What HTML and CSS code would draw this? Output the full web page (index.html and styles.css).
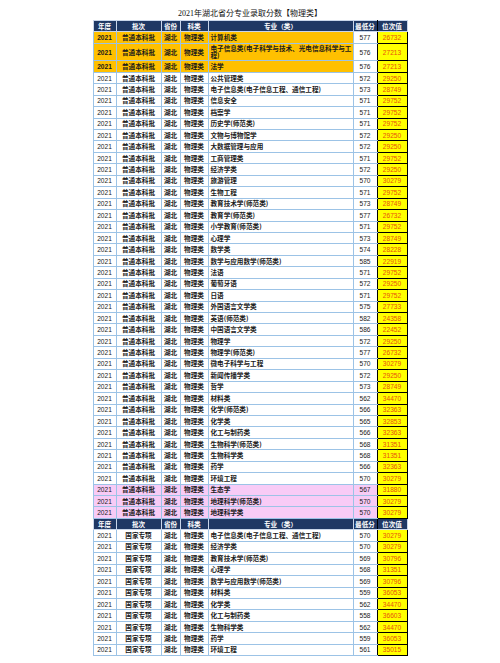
FILE: index.html
```html
<!DOCTYPE html>
<html lang="zh">
<head>
<meta charset="utf-8">
<title>2021年湖北省分专业录取分数【物理类】</title>
<link rel="stylesheet" href="styles.css">
</head>
<body>
<div class="page">
  <h1 class="title">2021年湖北省分专业录取分数【物理类】</h1>
  <table class="grid">
    <colgroup>
      <col class="w-year"><col class="w-batch"><col class="w-prov"><col class="w-type"><col class="w-major"><col class="w-score"><col class="w-rank">
    </colgroup>
    <tbody>
      <tr class="head"><th>年度</th><th>批次</th><th>省份</th><th>科类</th><th>专业（类）</th><th class="score">最低分</th><th>位次值</th></tr>
      <tr class="hl-orange"><td class="yr">2021</td><td>普通本科批</td><td>湖北</td><td>物理类</td><td class="major">计算机类</td><td class="score">577</td><td class="rank">26732</td></tr>
      <tr class="hl-orange tall"><td class="yr">2021</td><td>普通本科批</td><td>湖北</td><td>物理类</td><td class="major">电子信息类(电子科学与技术、光电信息科学与工程)</td><td class="score">576</td><td class="rank">27213</td></tr>
      <tr class="hl-orange"><td class="yr">2021</td><td>普通本科批</td><td>湖北</td><td>物理类</td><td class="major">法学</td><td class="score">576</td><td class="rank">27213</td></tr>
      <tr><td class="yr">2021</td><td>普通本科批</td><td>湖北</td><td>物理类</td><td class="major">公共管理类</td><td class="score">572</td><td class="rank">29250</td></tr>
      <tr><td class="yr">2021</td><td>普通本科批</td><td>湖北</td><td>物理类</td><td class="major">电子信息类(电子信息工程、通信工程)</td><td class="score">573</td><td class="rank">28749</td></tr>
      <tr><td class="yr">2021</td><td>普通本科批</td><td>湖北</td><td>物理类</td><td class="major">信息安全</td><td class="score">571</td><td class="rank">29752</td></tr>
      <tr><td class="yr">2021</td><td>普通本科批</td><td>湖北</td><td>物理类</td><td class="major">档案学</td><td class="score">571</td><td class="rank">29752</td></tr>
      <tr><td class="yr">2021</td><td>普通本科批</td><td>湖北</td><td>物理类</td><td class="major">历史学(师范类)</td><td class="score">571</td><td class="rank">29752</td></tr>
      <tr><td class="yr">2021</td><td>普通本科批</td><td>湖北</td><td>物理类</td><td class="major">文物与博物馆学</td><td class="score">572</td><td class="rank">29250</td></tr>
      <tr><td class="yr">2021</td><td>普通本科批</td><td>湖北</td><td>物理类</td><td class="major">大数据管理与应用</td><td class="score">572</td><td class="rank">29250</td></tr>
      <tr><td class="yr">2021</td><td>普通本科批</td><td>湖北</td><td>物理类</td><td class="major">工商管理类</td><td class="score">571</td><td class="rank">29752</td></tr>
      <tr><td class="yr">2021</td><td>普通本科批</td><td>湖北</td><td>物理类</td><td class="major">经济学类</td><td class="score">572</td><td class="rank">29250</td></tr>
      <tr><td class="yr">2021</td><td>普通本科批</td><td>湖北</td><td>物理类</td><td class="major">旅游管理</td><td class="score">570</td><td class="rank">30279</td></tr>
      <tr><td class="yr">2021</td><td>普通本科批</td><td>湖北</td><td>物理类</td><td class="major">生物工程</td><td class="score">571</td><td class="rank">29752</td></tr>
      <tr><td class="yr">2021</td><td>普通本科批</td><td>湖北</td><td>物理类</td><td class="major">教育技术学(师范类)</td><td class="score">573</td><td class="rank">28749</td></tr>
      <tr><td class="yr">2021</td><td>普通本科批</td><td>湖北</td><td>物理类</td><td class="major">教育学(师范类)</td><td class="score">577</td><td class="rank">26732</td></tr>
      <tr><td class="yr">2021</td><td>普通本科批</td><td>湖北</td><td>物理类</td><td class="major">小学教育(师范类)</td><td class="score">571</td><td class="rank">29752</td></tr>
      <tr><td class="yr">2021</td><td>普通本科批</td><td>湖北</td><td>物理类</td><td class="major">心理学</td><td class="score">573</td><td class="rank">28749</td></tr>
      <tr><td class="yr">2021</td><td>普通本科批</td><td>湖北</td><td>物理类</td><td class="major">数学类</td><td class="score">574</td><td class="rank">28228</td></tr>
      <tr><td class="yr">2021</td><td>普通本科批</td><td>湖北</td><td>物理类</td><td class="major">数学与应用数学(师范类)</td><td class="score">585</td><td class="rank">22919</td></tr>
      <tr><td class="yr">2021</td><td>普通本科批</td><td>湖北</td><td>物理类</td><td class="major">法语</td><td class="score">571</td><td class="rank">29752</td></tr>
      <tr><td class="yr">2021</td><td>普通本科批</td><td>湖北</td><td>物理类</td><td class="major">葡萄牙语</td><td class="score">572</td><td class="rank">29250</td></tr>
      <tr><td class="yr">2021</td><td>普通本科批</td><td>湖北</td><td>物理类</td><td class="major">日语</td><td class="score">571</td><td class="rank">29752</td></tr>
      <tr><td class="yr">2021</td><td>普通本科批</td><td>湖北</td><td>物理类</td><td class="major">外国语言文学类</td><td class="score">575</td><td class="rank">27733</td></tr>
      <tr><td class="yr">2021</td><td>普通本科批</td><td>湖北</td><td>物理类</td><td class="major">英语(师范类)</td><td class="score">582</td><td class="rank">24358</td></tr>
      <tr><td class="yr">2021</td><td>普通本科批</td><td>湖北</td><td>物理类</td><td class="major">中国语言文学类</td><td class="score">586</td><td class="rank">22452</td></tr>
      <tr><td class="yr">2021</td><td>普通本科批</td><td>湖北</td><td>物理类</td><td class="major">物理学</td><td class="score">572</td><td class="rank">29250</td></tr>
      <tr><td class="yr">2021</td><td>普通本科批</td><td>湖北</td><td>物理类</td><td class="major">物理学(师范类)</td><td class="score">577</td><td class="rank">26732</td></tr>
      <tr><td class="yr">2021</td><td>普通本科批</td><td>湖北</td><td>物理类</td><td class="major">微电子科学与工程</td><td class="score">570</td><td class="rank">30279</td></tr>
      <tr><td class="yr">2021</td><td>普通本科批</td><td>湖北</td><td>物理类</td><td class="major">新闻传播学类</td><td class="score">572</td><td class="rank">29250</td></tr>
      <tr><td class="yr">2021</td><td>普通本科批</td><td>湖北</td><td>物理类</td><td class="major">哲学</td><td class="score">573</td><td class="rank">28749</td></tr>
      <tr><td class="yr">2021</td><td>普通本科批</td><td>湖北</td><td>物理类</td><td class="major">材料类</td><td class="score">562</td><td class="rank">34470</td></tr>
      <tr><td class="yr">2021</td><td>普通本科批</td><td>湖北</td><td>物理类</td><td class="major">化学(师范类)</td><td class="score">566</td><td class="rank">32363</td></tr>
      <tr><td class="yr">2021</td><td>普通本科批</td><td>湖北</td><td>物理类</td><td class="major">化学类</td><td class="score">565</td><td class="rank">32853</td></tr>
      <tr><td class="yr">2021</td><td>普通本科批</td><td>湖北</td><td>物理类</td><td class="major">化工与制药类</td><td class="score">566</td><td class="rank">32363</td></tr>
      <tr><td class="yr">2021</td><td>普通本科批</td><td>湖北</td><td>物理类</td><td class="major">生物科学(师范类)</td><td class="score">568</td><td class="rank">31351</td></tr>
      <tr><td class="yr">2021</td><td>普通本科批</td><td>湖北</td><td>物理类</td><td class="major">生物科学类</td><td class="score">568</td><td class="rank">31351</td></tr>
      <tr><td class="yr">2021</td><td>普通本科批</td><td>湖北</td><td>物理类</td><td class="major">药学</td><td class="score">566</td><td class="rank">32363</td></tr>
      <tr><td class="yr">2021</td><td>普通本科批</td><td>湖北</td><td>物理类</td><td class="major">环境工程</td><td class="score">570</td><td class="rank">30279</td></tr>
      <tr class="hl-pink"><td class="yr">2021</td><td>普通本科批</td><td>湖北</td><td>物理类</td><td class="major">生态学</td><td class="score">567</td><td class="rank">31880</td></tr>
      <tr class="hl-pink"><td class="yr">2021</td><td>普通本科批</td><td>湖北</td><td>物理类</td><td class="major">地理科学(师范类)</td><td class="score">570</td><td class="rank">30279</td></tr>
      <tr class="hl-pink"><td class="yr">2021</td><td>普通本科批</td><td>湖北</td><td>物理类</td><td class="major">地理科学类</td><td class="score">570</td><td class="rank">30279</td></tr>
      <tr class="head"><th>年度</th><th>批次</th><th>省份</th><th>科类</th><th>专业（类）</th><th class="score">最低分</th><th>位次值</th></tr>
      <tr><td class="yr">2021</td><td>国家专项</td><td>湖北</td><td>物理类</td><td class="major">电子信息类(电子信息工程、通信工程)</td><td class="score">570</td><td class="rank">30279</td></tr>
      <tr><td class="yr">2021</td><td>国家专项</td><td>湖北</td><td>物理类</td><td class="major">经济学类</td><td class="score">570</td><td class="rank">30279</td></tr>
      <tr><td class="yr">2021</td><td>国家专项</td><td>湖北</td><td>物理类</td><td class="major">教育技术学(师范类)</td><td class="score">569</td><td class="rank">30796</td></tr>
      <tr><td class="yr">2021</td><td>国家专项</td><td>湖北</td><td>物理类</td><td class="major">心理学</td><td class="score">568</td><td class="rank">31351</td></tr>
      <tr><td class="yr">2021</td><td>国家专项</td><td>湖北</td><td>物理类</td><td class="major">数学与应用数学(师范类)</td><td class="score">569</td><td class="rank">30796</td></tr>
      <tr><td class="yr">2021</td><td>国家专项</td><td>湖北</td><td>物理类</td><td class="major">材料类</td><td class="score">559</td><td class="rank">36053</td></tr>
      <tr><td class="yr">2021</td><td>国家专项</td><td>湖北</td><td>物理类</td><td class="major">化学类</td><td class="score">562</td><td class="rank">34470</td></tr>
      <tr><td class="yr">2021</td><td>国家专项</td><td>湖北</td><td>物理类</td><td class="major">化工与制药类</td><td class="score">558</td><td class="rank">36603</td></tr>
      <tr><td class="yr">2021</td><td>国家专项</td><td>湖北</td><td>物理类</td><td class="major">生物科学类</td><td class="score">562</td><td class="rank">34470</td></tr>
      <tr><td class="yr">2021</td><td>国家专项</td><td>湖北</td><td>物理类</td><td class="major">药学</td><td class="score">559</td><td class="rank">36053</td></tr>
      <tr><td class="yr">2021</td><td>国家专项</td><td>湖北</td><td>物理类</td><td class="major">环境工程</td><td class="score">561</td><td class="rank">35015</td></tr>
    </tbody>
  </table>
</div>
</body>
</html>
```

FILE: styles.css
```css
html, body {
  margin: 0;
  padding: 0;
  background: #ffffff;
}

.page {
  width: 500px;
  height: 663px;
  overflow: hidden;
  display: flex;
  flex-direction: column;
  align-items: center;
}

.title {
  margin: 0;
  padding-top: 8px;
  height: 12px;
  line-height: 12px;
  font-family: "Liberation Serif", "Noto Sans CJK SC", serif;
  font-size: 8px;
  font-weight: normal;
  color: #111111;
  text-align: center;
}

.grid {
  width: 314px;
  table-layout: fixed;
  border-collapse: collapse;
  font-family: "Noto Sans CJK SC", sans-serif;
  font-size: 6.6px;
  color: #1a1a1a;
}

.w-year { width: 23px; }
.w-batch { width: 45px; }
.w-prov { width: 19px; }
.w-type { width: 28px; }
.w-major { width: 145px; }
.w-score { width: 24px; }
.w-rank { width: 30px; }

.grid td,
.grid th {
  box-sizing: border-box;
  height: 11.45px;
  padding: 0;
  line-height: 7px;
  border: 1px solid #9cc3e6;
  text-align: center;
  vertical-align: middle;
  font-weight: bold;
  white-space: nowrap;
  overflow: hidden;
}

.grid .head th {
  background: #1f3864;
  color: #ffffff;
  border-color: #c9d6ea;
}

.grid td.yr {
  font-family: "Liberation Sans", sans-serif;
  font-weight: normal;
}

.grid td.major {
  text-align: left;
  padding-left: 2px;
  padding-right: 0;
  white-space: normal;
  word-break: break-all;
}

.grid .tall td {
  height: 17.5px;
}

.grid td.score {
  font-family: "Liberation Sans", sans-serif;
  font-weight: normal;
  background: #ffffff;
  border-right: 1px solid #000000;
}

.grid th.score {
  border-right-color: #000000;
}

.grid td.rank {
  font-family: "Liberation Sans", sans-serif;
  font-weight: normal;
  background: #ffff00;
  color: #e8500c;
  border: 1px solid #000000;
}

.hl-orange td {
  background: #ffc000;
}

.hl-orange td.yr {
  font-weight: bold;
}

.hl-pink td {
  background: #f8cbf6;
}

.hl-pink td.score {
  background: #f8cbf6;
}
```
